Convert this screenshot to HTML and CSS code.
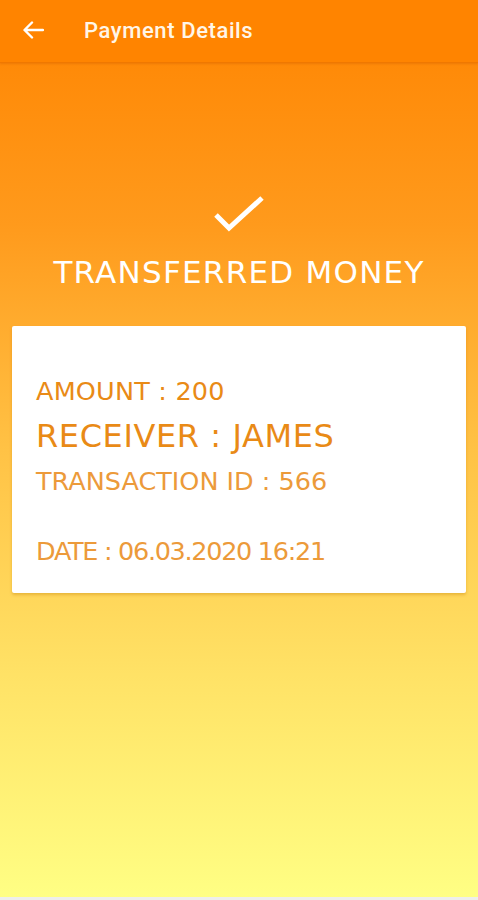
FILE: index.html
```html
<!DOCTYPE html>
<html lang="en">
<head>
  <meta charset="UTF-8" />
  <meta name="viewport" content="width=device-width, initial-scale=1.0"/>
  <title>Payment Details</title>
  <link rel="stylesheet" href="styles.css">
</head>
<body>

  <div class="screen">
    <header class="topbar">
      <svg class="back" width="22" height="20" viewBox="0 0 22 20">
        <path d="M21 10H3M10 2.5L2.5 10L10 17.5" fill="none" stroke="#fff" stroke-width="2.4" stroke-linecap="round" stroke-linejoin="round"/>
      </svg>
      <span class="title">Payment Details</span>
    </header>

    <main class="content">
      <svg class="check" width="54" height="40" viewBox="0 0 54 40">
        <path d="M4 21L17 34L50 4" fill="none" stroke="#fff" stroke-width="5"/>
      </svg>
      <h1 class="done">TRANSFERRED MONEY</h1>

      <div class="card">
        <p class="line amount">AMOUNT : 200</p>
        <p class="line receiver">RECEIVER : JAMES</p>
        <p class="line tx">TRANSACTION ID : 566</p>
        <p class="line date">DATE : 06.03.2020 16:21</p>
      </div>
    </main>
    <div class="navstrip"></div>
  </div>

</body>
</html>
```

FILE: styles.css
```css
* { box-sizing: border-box; }
body {
  margin: 0;
  font-family: 'DejaVu Sans', sans-serif;
}
.screen {
  width: 478px;
  height: 900px;
  display: flex;
  flex-direction: column;
  background: linear-gradient(#ff8400 0%, #ff9a1c 25%, #ffc245 50%, #ffe266 75%, #ffff84 100%);
  overflow: hidden;
}
.topbar {
  height: 63px;
  flex: none;
  display: flex;
  align-items: center;
  padding: 0 0 2px 22px;
  background: #ff8400;
  border-bottom: 1px solid #f07800;
  box-shadow: 0 1px 2px rgba(200,90,0,0.35);
}
.back {
  margin-right: 40px;
}
.title {
  font-family: Roboto, sans-serif;
  font-weight: 500;
  font-size: 22px;
  letter-spacing: 0.6px;
  color: #fff6e8;
}
.content {
  flex: 1;
  display: flex;
  flex-direction: column;
  align-items: center;
  padding-top: 131px;
}
.check {
  display: block;
}
.done {
  margin: 20px 0 36px;
  font-weight: normal;
  font-size: 31px;
  color: #fff;
  letter-spacing: 1.25px;
}
.card {
  width: 454px;
  height: 267px;
  background: #fff;
  border-radius: 2px;
  box-shadow: 0 2px 3px rgba(190,120,0,0.35);
  padding: 50px 24px 0;
}
.line {
  margin: 0;
  color: #e98a16;
  font-weight: normal;
}
.amount {
  font-size: 25.5px;
  letter-spacing: 0.2px;
}
.receiver {
  margin-top: 11px;
  font-size: 32px;
  letter-spacing: 0.6px;
}
.tx {
  margin-top: 11px;
  font-size: 25.5px;
  color: #ec9a3a;
}
.date {
  margin-top: 40px;
  font-size: 25.5px;
  letter-spacing: -1.3px;
  color: #ec9a3a;
}
.navstrip {
  height: 3px;
  flex: none;
  background: #eeeeea;
}
```
